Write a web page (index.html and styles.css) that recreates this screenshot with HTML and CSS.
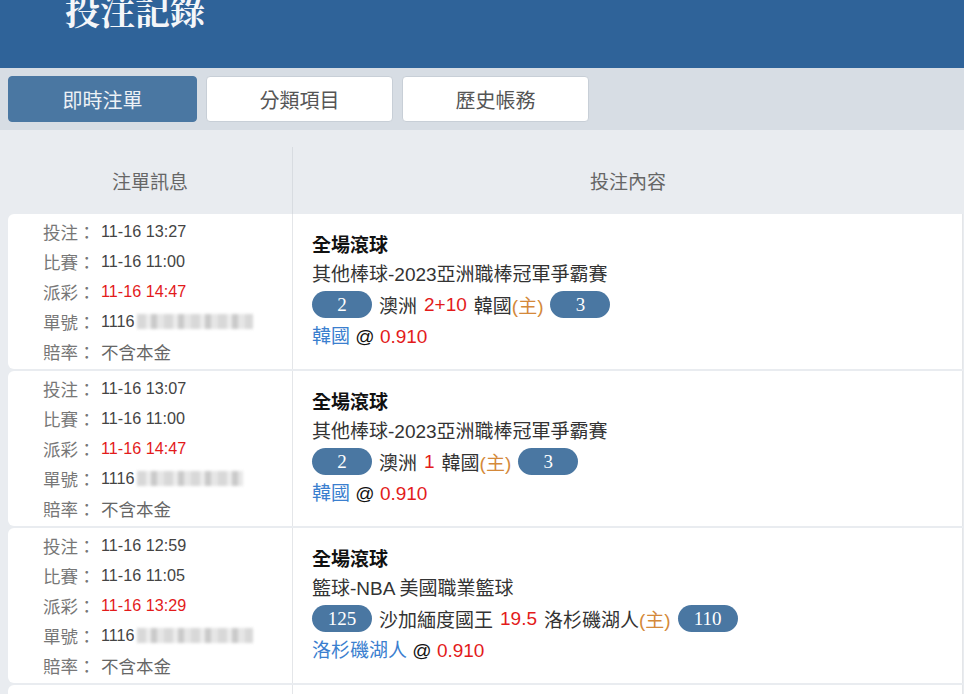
FILE: index.html
```html
<!DOCTYPE html>
<html lang="zh-Hant">
<head>
    <meta charset="UTF-8">
    <meta name="viewport" content="width=device-width, initial-scale=1.0">
    <title>投注記錄</title>
    <link rel="stylesheet" href="styles.css">
</head>
<body>

<header class="top">
    <h1>投注記錄</h1>
</header>

<nav class="tabs">
    <a class="tab active" href="#">即時注單</a>
    <a class="tab" href="#">分類項目</a>
    <a class="tab" href="#">歷史帳務</a>
</nav>

<main class="list">
    <div class="thead">
        <div class="th th-info">注單訊息</div>
        <div class="th th-bet">投注內容</div>
    </div>

    <div class="row">
        <div class="info">
            <div class="line"><span class="label">投注：</span><span class="value">11-16 13:27</span></div>
            <div class="line"><span class="label">比賽：</span><span class="value">11-16 11:00</span></div>
            <div class="line"><span class="label">派彩：</span><span class="value red">11-16 14:47</span></div>
            <div class="line"><span class="label">單號：</span><span class="value">1116<span class="masked"></span></span></div>
            <div class="line"><span class="label">賠率：</span><span class="value cjk">不含本金</span></div>
        </div>
        <div class="bet">
            <div class="bet-type">全場滾球</div>
            <div class="league">其他棒球-2023亞洲職棒冠軍爭霸賽</div>
            <div class="match">
                <span class="score">2</span>
                <span>澳洲</span>
                <span class="red">2+10</span>
                <span>韓國<span class="home">(主)</span></span>
                <span class="score">3</span>
            </div>
            <div class="pick"><span class="team">韓國</span> @ <span class="red">0.910</span></div>
        </div>
    </div>

    <div class="row">
        <div class="info">
            <div class="line"><span class="label">投注：</span><span class="value">11-16 13:07</span></div>
            <div class="line"><span class="label">比賽：</span><span class="value">11-16 11:00</span></div>
            <div class="line"><span class="label">派彩：</span><span class="value red">11-16 14:47</span></div>
            <div class="line"><span class="label">單號：</span><span class="value">1116<span class="masked short"></span></span></div>
            <div class="line"><span class="label">賠率：</span><span class="value cjk">不含本金</span></div>
        </div>
        <div class="bet">
            <div class="bet-type">全場滾球</div>
            <div class="league">其他棒球-2023亞洲職棒冠軍爭霸賽</div>
            <div class="match">
                <span class="score">2</span>
                <span>澳洲</span>
                <span class="red">1</span>
                <span>韓國<span class="home">(主)</span></span>
                <span class="score">3</span>
            </div>
            <div class="pick"><span class="team">韓國</span> @ <span class="red">0.910</span></div>
        </div>
    </div>

    <div class="row">
        <div class="info">
            <div class="line"><span class="label">投注：</span><span class="value">11-16 12:59</span></div>
            <div class="line"><span class="label">比賽：</span><span class="value">11-16 11:05</span></div>
            <div class="line"><span class="label">派彩：</span><span class="value red">11-16 13:29</span></div>
            <div class="line"><span class="label">單號：</span><span class="value">1116<span class="masked"></span></span></div>
            <div class="line"><span class="label">賠率：</span><span class="value cjk">不含本金</span></div>
        </div>
        <div class="bet">
            <div class="bet-type">全場滾球</div>
            <div class="league">籃球-NBA 美國職業籃球</div>
            <div class="match">
                <span class="score">125</span>
                <span>沙加緬度國王</span>
                <span class="red">19.5</span>
                <span>洛杉磯湖人<span class="home">(主)</span></span>
                <span class="score">110</span>
            </div>
            <div class="pick"><span class="team">洛杉磯湖人</span> @ <span class="red">0.910</span></div>
        </div>
    </div>

    <div class="row">
        <div class="info">
            <div class="line"><span class="label">投注：</span><span class="value">11-16 12:41</span></div>
            <div class="line"><span class="label">比賽：</span><span class="value">11-16 11:05</span></div>
            <div class="line"><span class="label">派彩：</span><span class="value red">11-16 13:29</span></div>
            <div class="line"><span class="label">單號：</span><span class="value">1116<span class="masked"></span></span></div>
            <div class="line"><span class="label">賠率：</span><span class="value cjk">不含本金</span></div>
        </div>
        <div class="bet">
            <div class="bet-type">全場滾球</div>
            <div class="league">籃球-NBA 美國職業籃球</div>
            <div class="match">
                <span class="score">98</span>
                <span>沙加緬度國王</span>
                <span class="red">12.5</span>
                <span>洛杉磯湖人<span class="home">(主)</span></span>
                <span class="score">91</span>
            </div>
            <div class="pick"><span class="team">洛杉磯湖人</span> @ <span class="red">0.910</span></div>
        </div>
    </div>
</main>

</body>
</html>
```

FILE: styles.css
```css
/* General Styling */
html, body {
    overflow: hidden;
}

body {
    margin: 0;
    padding: 0;
    background-color: #e9ecf0;
    color: #333;
    font-family: 'Liberation Sans', 'Noto Sans CJK TC', sans-serif;
}

/* Header */
.top {
    background-color: #2f6399;
    height: 68px;
    padding-left: 65px;
    overflow: hidden;
}

.top h1 {
    margin: -10px 0 0;
    font-family: 'Noto Serif CJK TC', 'Noto Sans CJK TC', serif;
    font-size: 35px;
    line-height: 40px;
    font-weight: 700;
    color: #f4f6f9;
}

/* Tabs */
.tabs {
    background-color: #d7dde4;
    display: flex;
    gap: 9px;
    padding: 8px;
    height: 46px;
}

.tab {
    width: 187px;
    box-sizing: border-box;
    display: flex;
    align-items: center;
    justify-content: center;
    background-color: white;
    border: 1px solid #c8cfd7;
    border-radius: 4px;
    font-family: 'Noto Sans CJK TC', sans-serif;
    font-size: 20px;
    color: #555;
    text-decoration: none;
}

.tab.active {
    width: 189px;
    background-color: #4a77a2;
    border-color: #4a77a2;
    color: #edf1f6;
}

/* Table */
.list {
    padding: 17px 1px 0 8px;
}

.thead {
    display: grid;
    grid-template-columns: 285px 1fr;
    height: 67px;
}

.th {
    display: flex;
    align-items: center;
    justify-content: center;
    font-family: 'Noto Sans CJK TC', sans-serif;
    font-size: 19px;
    color: #666;
}

.th-info {
    border-right: 1px solid #d8dce1;
}

.row {
    display: grid;
    grid-template-columns: 285px 1fr;
    height: 155px;
    margin-bottom: 2px;
}

.info {
    background-color: white;
    border-radius: 6px 0 0 6px;
    border-right: 1px solid #e4e6e9;
    padding-left: 35px;
    display: flex;
    flex-direction: column;
    justify-content: center;
}

.line {
    height: 30px;
    display: flex;
    align-items: center;
}

.label {
    font-family: 'Noto Sans CJK TC', sans-serif;
    font-size: 17.5px;
    color: #777;
    width: 58px;
}

.value {
    font-size: 16.2px;
    color: #444;
    display: flex;
    align-items: center;
}

.value.cjk {
    font-family: 'Noto Sans CJK TC', sans-serif;
    font-size: 17.5px;
    color: #666;
}

.masked {
    display: inline-block;
    width: 116px;
    height: 15px;
    margin-left: 2px;
    background: repeating-linear-gradient(90deg, #cfcfcf 0 9px, #e8e8e8 9px 14px, #bdbdbd 14px 20px, #e0e0e0 20px 27px);
    filter: blur(1.5px);
    opacity: 0.8;
}

.masked.short {
    width: 106px;
}

.bet {
    background-color: white;
    border-right: 1px solid #e4e6e9;
    padding: 15px 0 0 19px;
    font-size: 19px;
    color: #333;
}

.bet-type {
    font-family: 'Noto Sans CJK TC', sans-serif;
    font-weight: 700;
    color: #111;
    line-height: 30px;
}

.league {
    margin-top: 1px;
    line-height: 30px;
}

.match {
    height: 29px;
    display: flex;
    align-items: center;
    gap: 7px;
}

.score {
    min-width: 60px;
    height: 27px;
    box-sizing: border-box;
    padding: 0 12px;
    border-radius: 14px;
    background-color: #4a77a2;
    color: white;
    font-family: 'Liberation Serif', serif;
    font-size: 19px;
    display: inline-flex;
    align-items: center;
    justify-content: center;
}

.home {
    color: #d4893a;
}

.pick {
    margin-top: 3px;
    line-height: 30px;
    color: #111;
}

.team {
    color: #3b7fcf;
}

.red {
    color: #e31b1b;
}
```
